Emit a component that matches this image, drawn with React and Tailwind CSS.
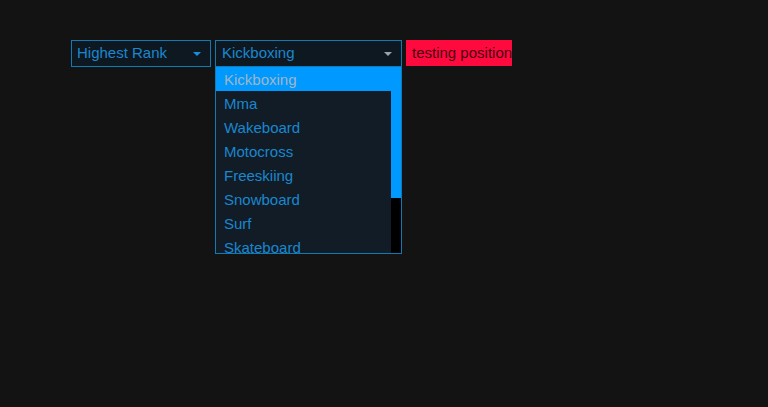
import React from 'react';

const sports = ['Kickboxing', 'Mma', 'Wakeboard', 'Motocross', 'Freeskiing', 'Snowboard', 'Surf', 'Skateboard'];

function Arrow({ className }) {
  return (
    <svg width="8" height="4" viewBox="0 0 8 4" className={className}>
      <path d="M0 0 L8 0 L4 4 Z" fill="currentColor" />
    </svg>
  );
}

export default function App() {
  return (
    <div className="w-[768px] h-[407px] bg-[#131313] overflow-hidden" style={{ fontFamily: '"Liberation Sans", Arial, sans-serif' }}>
      <div className="flex items-start gap-[4px] pt-[40px] pl-[71px]">
        {/* first select */}
        <div className="w-[140px] h-[27px] flex items-center border border-[#0f7ab3] bg-[#0e1821] pl-[5px] pr-[9px] text-[15px] text-[#1a87cf]">
          <span>Highest Rank</span>
          <Arrow className="ml-auto text-[#1a8fe0]" />
        </div>

        {/* second select, open */}
        <div className="w-[187px] flex flex-col">
          <div className="h-[27px] flex items-center border border-[#0f7ab3] bg-[#0e1821] pl-[6px] pr-[9px] text-[15px] text-[#1a87cf]">
            <span>Kickboxing</span>
            <Arrow className="ml-auto text-[#9aa3ab]" />
          </div>
          <div className="h-[187px] flex border-x border-b border-[#0f7ab3] bg-[#111c26] overflow-hidden">
            <div className="flex-1 flex flex-col">
              {sports.map((s, i) => (
                <div
                  key={s}
                  className={
                    i === 0
                      ? 'h-[24px] shrink-0 flex items-center pl-[8px] pt-[2px] text-[15px] bg-[#0099ff] text-[#a3b5c3]'
                      : 'h-[24px] shrink-0 flex items-center pl-[8px] pt-[2px] text-[15px] text-[#1a87cf]'
                  }
                >
                  {s}
                </div>
              ))}
            </div>
            <div className="w-[10px] flex flex-col bg-black">
              <div className="h-[131px] bg-[#0099ff]" />
            </div>
          </div>
        </div>

        {/* label */}
        <div className="w-[106px] h-[26px] flex items-center bg-[#ff0a3f] pl-[6px] text-[15px] text-[#4a0010] whitespace-nowrap overflow-hidden">
          testing position
        </div>
      </div>
    </div>
  );
}
